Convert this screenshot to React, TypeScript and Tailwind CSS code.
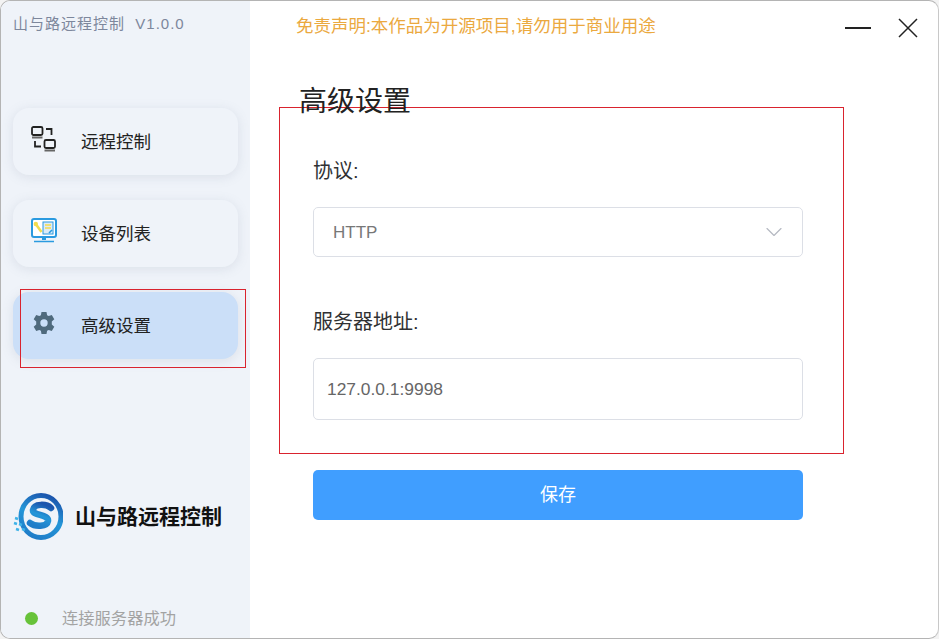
import React from 'react';
import { ChevronDown } from 'lucide-react';

const font = 'font-["Liberation_Sans","Noto_Sans_CJK_SC",sans-serif]';

const RemoteIcon = () => (
  <svg width="26" height="26" viewBox="0 0 26 26" fill="none" stroke="#222" strokeWidth="1.8">
    <rect x="1" y="1" width="10.5" height="8" rx="1.5" />
    <path d="M1 11.6h10.5" strokeWidth="2" stroke="#666" />
    <rect x="13.5" y="14" width="10.5" height="8" rx="1.5" />
    <path d="M13.5 24.6h10.5" strokeWidth="2" stroke="#666" />
    <path d="M15 3h5.5v6" />
    <path d="M4 15v5.5h6" />
  </svg>
);

const DeviceIcon = () => (
  <svg width="26" height="26" viewBox="0 0 26 26" fill="none">
    <rect x="1" y="1" width="24" height="18" rx="2" fill="#fff" stroke="#2a9ae0" strokeWidth="2" />
    <path d="M4 5l6.5 9" stroke="#f2dc4e" strokeWidth="2.6" />
    <circle cx="4.8" cy="6" r="2.2" fill="#f2dc4e" />
    <rect x="12" y="4" width="10" height="12" fill="#dcebf7" stroke="#2a9ae0" strokeWidth="1" />
    <path d="M14 7h6M14 10h6" stroke="#f2dc4e" strokeWidth="1.4" />
    <path d="M18 15l3-3" stroke="#2a9ae0" strokeWidth="1.6" />
    <path d="M11 19.5h4V22h-4z" fill="#2a9ae0" />
    <path d="M3 23.5h20" stroke="#2a9ae0" strokeWidth="1.6" />
  </svg>
);

const GearIcon = () => (
  <svg width="24" height="24" viewBox="0 0 24 24" className="ml-[1px]">
    <path
      fillRule="evenodd"
      fill="#4f6a7d"
      d="M9.5 1h5l.6 3.2 1.6.9 3.1-1.1 2.5 4.3-2.5 2.1v3.2l2.5 2.1-2.5 4.3-3.1-1.1-1.6.9-.6 3.2h-5l-.6-3.2-1.6-.9-3.1 1.1-2.5-4.3 2.5-2.1v-3.2L1.700 8.300l2.500-4.300 3.100 1.100 1.600-.9zM12 8.300a3.700 3.700 0 1 0 0 7.400 3.700 3.700 0 0 0 0-7.400z"
    />
  </svg>
);

const Logo = () => (
  <svg width="50" height="50" viewBox="0 0 50 50" fill="none">
    <defs>
      <linearGradient id="ring" x1="0.7" y1="0" x2="0.3" y2="1">
        <stop offset="0" stopColor="#1b55ad" />
        <stop offset="0.5" stopColor="#2496d8" />
        <stop offset="1" stopColor="#1f7cc8" />
      </linearGradient>
    </defs>
    <ellipse cx="28" cy="24.500" rx="20" ry="21" fill="#eff3f9" stroke="url(#ring)" strokeWidth="5" />
    <path d="M38 16c-4-4-17-5-18 2-.8 6 16 4 15 11-1 6-13 6-18 2" stroke="url(#ring)" strokeWidth="6.500" strokeLinecap="round" />
    <path d="M2 26l3 1M1 31l3 1M6 32l3 1M3 37l3 1M9 37l3 1" stroke="#3eb2e8" strokeWidth="2.500" />
  </svg>
);

const navItems = [
  { label: '远程控制', icon: <RemoteIcon />, active: false },
  { label: '设备列表', icon: <DeviceIcon />, active: false },
  { label: '高级设置', icon: <GearIcon />, active: true },
];

const App: React.FC = () => {
  return (
    <div className={`h-[639px] w-[939px] overflow-hidden bg-[#f3f3f3] ${font}`}>
      <div className="flex h-full overflow-hidden rounded-[10px] border border-[#b4b4b4] border-r-[#c8c8c8] bg-white">
        {/* Sidebar */}
        <aside className="flex w-[249px] shrink-0 flex-col overflow-hidden bg-[#eff3f9]">
          <div className="pl-3 pt-[14px] text-[15px] leading-[18px] tracking-[1px] text-[#7d879c]">
            山与路远程控制&nbsp; V1.0.0
          </div>
          <nav className="mt-[75px] flex flex-col gap-[25px] pl-3">
            {navItems.map((item) => (
              <div
                key={item.label}
                className={`relative flex h-[67px] w-[225px] items-center rounded-2xl pl-[18px] shadow-[0_2px_12px_rgba(110,125,150,0.16)] ${
                  item.active ? 'bg-[#cbdff8]' : 'bg-[#eff3f9]'
                }`}
              >
                <span className="mb-[5px] flex w-[50px] shrink-0">{item.icon}</span>
                <span className="text-[17.5px] leading-6 text-[#222]">{item.label}</span>
                {item.active && (
                  <div className="pointer-events-none absolute -top-[3px] left-[7px] h-[79px] w-[226px] border border-[#d9232e]" />
                )}
              </div>
            ))}
          </nav>
          <div className="mt-[133px] flex items-center pl-3">
            <Logo />
            <span className="ml-[12px] text-[21px] font-bold leading-7 text-[#111]">山与路远程控制</span>
          </div>
          <div className="mt-[64px] flex items-center pl-[24px]">
            <span className="h-[13px] w-[13px] rounded-full bg-[#67c23a]" />
            <span className="ml-[24px] text-[16.3px] leading-6 text-[#a3a3a3]">连接服务器成功</span>
          </div>
        </aside>

        {/* Main */}
        <main className="relative flex-1 pl-[29px]">
          <div className="flex h-[50px] items-start justify-between">
            <p className="pl-[17px] pt-[13px] text-[17.5px] leading-6 text-[#eba93f]">
              免责声明:本作品为开源项目,请勿用于商业用途
            </p>
            <div className="flex items-center gap-[27px] pr-5 pt-[17px]">
              <div className="h-[2px] w-[26px] bg-[#222]" />
              <svg width="20" height="20" viewBox="0 0 20 20" stroke="#222" strokeWidth="1.500">
                <path d="M1 1l18 18M19 1L1 19" />
              </svg>
            </div>
          </div>

          <h1 className="relative z-10 ml-[20px] mt-[33px] text-[28px] font-normal leading-[36px] text-[#222]">高级设置</h1>

          <form className="-mt-[13px] w-[565px] border border-[#d9232e] px-[33px] pt-[51px]">
            <label className="block text-[20px] leading-6 text-[#303133]">协议:</label>
            <div className="mt-[24px] flex h-[50px] w-[490px] items-center justify-between rounded-[5px] border border-[#dcdfe6] pl-[19px] pr-[14px]">
              <span className="pt-[2px] text-[17px] text-[#777]">HTTP</span>
              <ChevronDown className="h-7 w-7 text-[#b5b9c2]" strokeWidth={1} />
            </div>
            <label className="mt-[53px] block text-[20px] leading-6 text-[#303133]">服务器地址:</label>
            <div className="mt-[24px] flex h-[62px] w-[490px] items-center rounded-[5px] border border-[#dcdfe6] pl-[13px]">
              <span className="text-[17.4px] text-[#666]">127.0.0.1:9998</span>
            </div>
            <div className="h-[33px]" />
          </form>

          <button className="ml-[34px] mt-[16px] flex h-[50px] w-[490px] items-center justify-center rounded-[5px] bg-[#409eff] text-[18px] text-white">
            保存
          </button>
        </main>
      </div>
    </div>
  );
};

export default App;
